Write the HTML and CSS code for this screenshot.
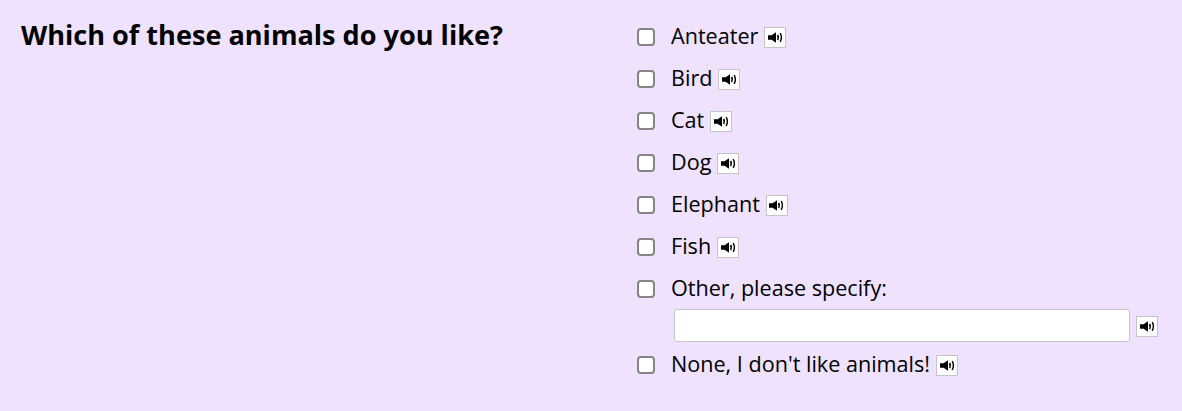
FILE: index.html
```html
<!DOCTYPE html>
<html lang="en">
<head>
    <meta charset="UTF-8">
    <title>Which of these animals do you like?</title>
    <link rel="stylesheet" href="styles.css">
</head>
<body>
    <svg class="sprite" width="0" height="0" aria-hidden="true">
        <symbol id="speaker" viewBox="0 0 15 11">
            <path d="M0 3.2h3.6L8 .2v10.6L3.6 7.8H0z" fill="#000"/>
            <path d="M9.6 3q1.4 2.5 0 5" fill="none" stroke="#000" stroke-width="1.7"/>
            <path d="M12.2 1.2q2.4 4.3 0 8.6" fill="none" stroke="#000" stroke-width="1.4"/>
        </symbol>
    </svg>

    <main class="question">
        <h1 class="question-title">Which of these animals do you like?</h1>

        <ul class="options">
            <li class="option">
                <input type="checkbox" class="check">
                <span class="label">Anteater</span>
                <button class="audio" aria-label="Play"><svg class="audio-icon"><use href="#speaker"/></svg></button>
            </li>
            <li class="option">
                <input type="checkbox" class="check">
                <span class="label">Bird</span>
                <button class="audio" aria-label="Play"><svg class="audio-icon"><use href="#speaker"/></svg></button>
            </li>
            <li class="option">
                <input type="checkbox" class="check">
                <span class="label">Cat</span>
                <button class="audio" aria-label="Play"><svg class="audio-icon"><use href="#speaker"/></svg></button>
            </li>
            <li class="option">
                <input type="checkbox" class="check">
                <span class="label">Dog</span>
                <button class="audio" aria-label="Play"><svg class="audio-icon"><use href="#speaker"/></svg></button>
            </li>
            <li class="option">
                <input type="checkbox" class="check">
                <span class="label">Elephant</span>
                <button class="audio" aria-label="Play"><svg class="audio-icon"><use href="#speaker"/></svg></button>
            </li>
            <li class="option">
                <input type="checkbox" class="check">
                <span class="label">Fish</span>
                <button class="audio" aria-label="Play"><svg class="audio-icon"><use href="#speaker"/></svg></button>
            </li>
            <li class="option">
                <input type="checkbox" class="check">
                <span class="label">Other, please specify:</span>
            </li>
            <li class="other-row">
                <input type="text" class="other-input">
                <button class="audio" aria-label="Play"><svg class="audio-icon"><use href="#speaker"/></svg></button>
            </li>
            <li class="option">
                <input type="checkbox" class="check">
                <span class="label">None, I don't like animals!</span>
                <button class="audio" aria-label="Play"><svg class="audio-icon"><use href="#speaker"/></svg></button>
            </li>
        </ul>
    </main>
</body>
</html>
```

FILE: styles.css
```css
body {
    margin: 0;
    background-color: #efe2ff;
    color: #000;
    font-family: "Open Sans", sans-serif;
    height: 411px;
    overflow: hidden;
}

.sprite {
    display: block;
}

.question {
    display: flex;
    padding: 15px 20px 0 21px;
}

.question-title {
    width: 615px;
    margin: 0;
    font-size: 27.1px;
    line-height: 40px;
    font-weight: 700;
}

.options {
    list-style: none;
    margin: 0;
    padding: 0;
}

.option {
    display: flex;
    align-items: center;
    height: 42px;
}

.check {
    appearance: none;
    box-sizing: border-box;
    width: 18px;
    height: 18px;
    margin: 2px 16px 0 1px;
    background-color: #fff;
    border: 2px solid #858585;
    border-radius: 4px;
}

.label {
    font-size: 21.6px;
    line-height: 42px;
}

.audio {
    display: flex;
    align-items: center;
    justify-content: center;
    width: 22px;
    height: 21px;
    margin: 3px 0 0 6px;
    padding: 0;
    background-color: #fff;
    border: 1px solid #c4c4c4;
}

.audio-icon {
    width: 15px;
    height: 11px;
}

.other-row {
    display: flex;
    align-items: center;
    height: 34px;
    margin: -1px 0 1px 38px;
}

.other-input {
    box-sizing: border-box;
    width: 456px;
    height: 33px;
    margin: 1px 0 0;
    padding: 0 8px;
    background-color: #fff;
    border: 1px solid #c4c4c4;
    border-radius: 3px;
}
```
